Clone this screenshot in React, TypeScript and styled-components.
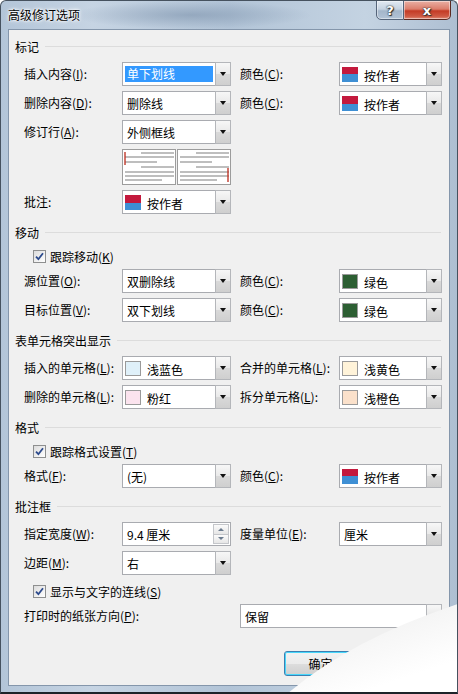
import React from 'react';
import styled, { createGlobalStyle } from 'styled-components';

const GlobalStyle = createGlobalStyle`
  html, body {
    margin: 0;
    padding: 0;
    background: #ffffff;
  }
  body {
    font-family: "Noto Sans CJK SC", "Noto Sans", sans-serif;
  }
`;

const Window = styled.div`
  position: relative;
  width: 458px;
  height: 694px;
  box-sizing: border-box;
  border: 1px solid #46525f;
  border-bottom: 2px solid #1d2329;
  border-radius: 6px 6px 0 0;
  background:
    radial-gradient(ellipse 120px 14px at 190px 14px, rgba(120, 142, 168, 0.55), rgba(120, 142, 168, 0)),
    linear-gradient(90deg, #b3c5d8 0%, #c6d4e3 20%, #b2c4d7 50%, #c4d3e2 80%, #aebfd2 100%);
  overflow: hidden;
  display: flex;
  flex-direction: column;
`;

const TitleBar = styled.div`
  height: 28px;
  flex: none;
  display: flex;
  align-items: flex-start;
  padding-left: 7px;
`;

const Title = styled.div`
  font-size: 12px;
  line-height: 28px;
  color: #000;
  text-shadow: 0 0 5px #fff, 0 0 3px #fff, 0 0 2px #fff;
`;

const Controls = styled.div`
  margin-left: auto;
  margin-right: 6px;
  margin-top: -1px;
  display: flex;
`;

const CaptionButton = styled.div<{ $close?: boolean }>`
  width: ${(p) => (p.$close ? 47 : 28)}px;
  height: 20px;
  box-sizing: border-box;
  border: 1px solid ${(p) => (p.$close ? '#5b2a22' : '#55647a')};
  border-left-width: ${(p) => (p.$close ? 0 : 1)}px;
  border-radius: ${(p) => (p.$close ? '0 0 5px 0' : '0 0 0 5px')};
  background: ${(p) =>
    p.$close
      ? 'linear-gradient(#eab0a4 0%, #dc7e6c 45%, #c43b25 55%, #cf5a44 85%, #e08d78 100%)'
      : 'linear-gradient(#e1e9f2 0%, #c6d3e1 45%, #a4b6ca 55%, #b2c3d6 100%)'};
  box-shadow: inset 0 0 0 1px rgba(255, 255, 255, 0.45);
  display: flex;
  align-items: center;
  justify-content: center;
  font-family: "DejaVu Sans", sans-serif;
  font-weight: bold;
  font-size: 13px;
  color: #fff;
  text-shadow: 0 0 1px #222, 0 0 2px #333, 1px 1px 1px #333;
`;

const Client = styled.div`
  flex: 1;
  margin: 0 7px 6px 7px;
  box-sizing: border-box;
  border: 1px solid #8496ab;
  background: #f0f0f0;
  padding-top: 8px;
  display: flex;
  flex-direction: column;
  font-size: 12px;
  color: #000;
`;

const Section = styled.div<{ $first?: boolean }>`
  display: flex;
  flex-direction: column;
  gap: 5px;
  margin-top: ${(p) => (p.$first ? 0 : 10)}px;
`;

const Heading = styled.div`
  display: flex;
  align-items: center;
  height: 16px;
  padding-left: 6px;
  padding-right: 8px;
  margin-bottom: 3px;
  white-space: nowrap;

  &::after {
    content: '';
    flex: 1;
    height: 1px;
    background: #dcdcdc;
    margin-left: 6px;
  }
`;

const Row = styled.div`
  display: grid;
  grid-template-columns: 89px 109px 90px 103px;
  column-gap: 9px;
  margin-left: 15px;
  align-items: center;
`;

const Label = styled.div<{ $span?: number }>`
  grid-column: span ${(p) => p.$span ?? 1};
  line-height: 24px;
  white-space: nowrap;
`;

const Combo = styled.div<{ $span?: number; $col?: number }>`
  grid-column: ${(p) => (p.$col ? `${p.$col} / span ${p.$span ?? 1}` : `span ${p.$span ?? 1}`)};
  height: 24px;
  box-sizing: border-box;
  border: 1px solid #a9abb0;
  background: #fff;
  display: flex;
  align-items: stretch;
`;

const Value = styled.div`
  flex: 1;
  min-width: 0;
  padding-left: 4px;
  display: flex;
  align-items: center;
  white-space: nowrap;
`;

const Selected = styled.div`
  flex: 1;
  height: 16px;
  line-height: 16px;
  margin-left: -2px;
  margin-right: 2px;
  padding-left: 2px;
  background: #3399ff;
  color: #fff;
`;

const Swatch = styled.div<{ $color?: string; $split?: boolean }>`
  width: 16px;
  height: 15px;
  flex: none;
  box-sizing: border-box;
  margin-left: -2px;
  margin-right: 6px;
  border: ${(p) => (p.$split ? 'none' : '1px solid #9a9a9a')};
  background: ${(p) => (p.$split ? 'linear-gradient(#c3193d 50%, #3e8fd4 50%)' : p.$color)};
`;

const SwatchText = styled.span`
  padding-top: 3px;
`;

const DropButton = styled.div`
  width: 16px;
  flex: none;
  box-sizing: border-box;
  border: 1px solid #b4b6ba;
  margin: -1px -1px -1px 0;
  background: linear-gradient(#f7f7f7 0%, #e9e9e9 50%, #d9d9d9 51%, #cfcfcf 100%);
  display: flex;
  align-items: center;
  justify-content: center;

  &::after {
    content: '';
    border-left: 3.5px solid transparent;
    border-right: 3.5px solid transparent;
    border-top: 4px solid #111;
  }
`;

const Spin = styled.div`
  width: 16px;
  flex: none;
  display: flex;
  flex-direction: column;
  margin: 1px 1px 1px 0;
`;

const SpinHalf = styled.div<{ $down?: boolean }>`
  flex: 1;
  box-sizing: border-box;
  border: 1px solid #c4c6ca;
  border-top-width: ${(p) => (p.$down ? 0 : 1)}px;
  background: linear-gradient(#fbfbfb, #e6e6e6);
  display: flex;
  align-items: center;
  justify-content: center;

  &::after {
    content: '';
    border-left: 3px solid transparent;
    border-right: 3px solid transparent;
    ${(p) => (p.$down ? 'border-top: 3px solid #6b7b8e;' : 'border-bottom: 3px solid #6b7b8e;')}
  }
`;

const CheckRow = styled.label<{ $top?: number }>`
  display: flex;
  align-items: center;
  height: 16px;
  margin-left: 24px;
  margin-top: ${(p) => p.$top ?? 0}px;
  white-space: nowrap;
`;

const Box = styled.span`
  width: 13px;
  height: 13px;
  box-sizing: border-box;
  border: 1px solid #8e8f8f;
  background: linear-gradient(135deg, #dcdcdc, #ffffff);
  margin-right: 4px;
  display: flex;
  align-items: center;
  justify-content: center;
`;

const Preview = styled.svg`
  grid-column: 2;
  display: block;
`;

const Footer = styled.div`
  display: flex;
  justify-content: flex-end;
  gap: 8px;
  margin-top: 23px;
  padding-right: 11px;
`;

const Button = styled.div<{ $default?: boolean }>`
  width: 73px;
  height: 25px;
  box-sizing: border-box;
  border: 1px solid ${(p) => (p.$default ? '#3c7fb1' : '#707070')};
  border-radius: 3px;
  background: linear-gradient(#f2f2f2 0%, #ebebeb 50%, #dddddd 51%, #cfcfcf 100%);
  box-shadow: inset 0 0 0 1px ${(p) => (p.$default ? '#48d7fb' : 'rgba(255,255,255,0.6)')};
  display: flex;
  align-items: center;
  justify-content: center;
`;

const Curl = styled.svg`
  position: absolute;
  right: -1px;
  bottom: -2px;
  display: block;
`;

const Check = () => (
  <Box>
    <svg width="9" height="9" viewBox="0 0 9 9">
      <path d="M1 4.6 L3.4 7.2 L8 1.2" fill="none" stroke="#2c4a8c" strokeWidth="1.8" />
    </svg>
  </Box>
);

const Drop: React.FC<{ children?: React.ReactNode; span?: number; col?: number }> = ({ children, span, col }) => (
  <Combo $span={span} $col={col}>
    <Value>{children}</Value>
    <DropButton />
  </Combo>
);

const ColorDrop: React.FC<{ color?: string; split?: boolean; name: string }> = ({ color, split, name }) => (
  <Drop>
    <Swatch $color={color} $split={split} />
    <SwatchText>{name}</SwatchText>
  </Drop>
);

const GREEN = '#2d5f33';

const lines: [number, number, number][] = [
  [4, 19, 52],
  [8, 3, 52],
  [13, 3, 35],
  [18, 19, 52],
  [23, 3, 52],
  [27, 3, 52],
  [31, 3, 40],
];

const RevisionPreview = () => (
  <Preview width="109" height="36" viewBox="0 0 109 36">
    {[0, 55].map((ox) => (
      <g key={ox} transform={`translate(${ox} 0)`}>
        <rect x="0.5" y="0.5" width="53" height="35" fill="#fff" stroke="#9c9c9c" />
        {lines.map(([y, x1, x2]) => (
          <line key={y} x1={x1} x2={x2} y1={y} y2={y} stroke="#a9a9a9" strokeWidth="1.4" />
        ))}
      </g>
    ))}
    <line x1="3" x2="3" y1="3" y2="16" stroke="#c0392b" strokeWidth="1.4" />
    <line x1="106" x2="106" y1="19" y2="33" stroke="#c0392b" strokeWidth="1.4" />
  </Preview>
);

const App = () => (
  <>
    <GlobalStyle />
    <Window>
      <TitleBar>
        <Title>高级修订选项</Title>
        <Controls>
          <CaptionButton>?</CaptionButton>
          <CaptionButton $close>x</CaptionButton>
        </Controls>
      </TitleBar>
      <Client>
        <Section $first>
          <Heading>标记</Heading>
          <Row>
            <Label>插入内容(<u>I</u>):</Label>
            <Drop>
              <Selected>单下划线</Selected>
            </Drop>
            <Label>颜色(<u>C</u>):</Label>
            <ColorDrop split name="按作者" />
          </Row>
          <Row>
            <Label>删除内容(<u>D</u>):</Label>
            <Drop>删除线</Drop>
            <Label>颜色(<u>C</u>):</Label>
            <ColorDrop split name="按作者" />
          </Row>
          <Row>
            <Label>修订行(<u>A</u>):</Label>
            <Drop>外侧框线</Drop>
          </Row>
          <Row>
            <RevisionPreview />
          </Row>
          <Row>
            <Label>批注:</Label>
            <ColorDrop split name="按作者" />
          </Row>
        </Section>

        <Section>
          <Heading>移动</Heading>
          <CheckRow>
            <Check />
            跟踪移动(<u>K</u>)
          </CheckRow>
          <Row>
            <Label>源位置(<u>O</u>):</Label>
            <Drop>双删除线</Drop>
            <Label>颜色(<u>C</u>):</Label>
            <ColorDrop color={GREEN} name="绿色" />
          </Row>
          <Row>
            <Label>目标位置(<u>V</u>):</Label>
            <Drop>双下划线</Drop>
            <Label>颜色(<u>C</u>):</Label>
            <ColorDrop color={GREEN} name="绿色" />
          </Row>
        </Section>

        <Section>
          <Heading>表单元格突出显示</Heading>
          <Row>
            <Label>插入的单元格(<u>L</u>):</Label>
            <ColorDrop color="#dff0f9" name="浅蓝色" />
            <Label>合并的单元格(<u>L</u>):</Label>
            <ColorDrop color="#fff3d9" name="浅黄色" />
          </Row>
          <Row>
            <Label>删除的单元格(<u>L</u>):</Label>
            <ColorDrop color="#fbe3ee" name="粉红" />
            <Label>拆分单元格(<u>L</u>):</Label>
            <ColorDrop color="#fbe1cb" name="浅橙色" />
          </Row>
        </Section>

        <Section>
          <Heading>格式</Heading>
          <CheckRow>
            <Check />
            跟踪格式设置(<u>T</u>)
          </CheckRow>
          <Row>
            <Label>格式(<u>F</u>):</Label>
            <Drop>(无)</Drop>
            <Label>颜色(<u>C</u>):</Label>
            <ColorDrop split name="按作者" />
          </Row>
        </Section>

        <Section>
          <Heading>批注框</Heading>
          <Row>
            <Label>指定宽度(<u>W</u>):</Label>
            <Combo>
              <Value>9.4 厘米</Value>
              <Spin>
                <SpinHalf />
                <SpinHalf $down />
              </Spin>
            </Combo>
            <Label>度量单位(<u>E</u>):</Label>
            <Drop>厘米</Drop>
          </Row>
          <Row>
            <Label>边距(<u>M</u>):</Label>
            <Drop>右</Drop>
          </Row>
          <CheckRow $top={3}>
            <Check />
            显示与文字的连线(<u>S</u>)
          </CheckRow>
          <Row>
            <Label $span={2}>打印时的纸张方向(<u>P</u>):</Label>
            <Drop span={2} col={3}>保留</Drop>
          </Row>
        </Section>

        <Footer>
          <Button $default>确定</Button>
          <Button>取消</Button>
        </Footer>
      </Client>

      <Curl width="180" height="100" viewBox="0 0 180 100">
        <defs>
          <linearGradient id="curlShade" x1="0.2" y1="0.15" x2="0.65" y2="0.85">
            <stop offset="0" stopColor="#d6d6d6" />
            <stop offset="0.3" stopColor="#f4f4f4" />
            <stop offset="1" stopColor="#ffffff" />
          </linearGradient>
        </defs>
        <path d="M9 100 Q72 46 180 10 L180 100 Z" fill="url(#curlShade)" />
      </Curl>
    </Window>
  </>
);

export default App;
